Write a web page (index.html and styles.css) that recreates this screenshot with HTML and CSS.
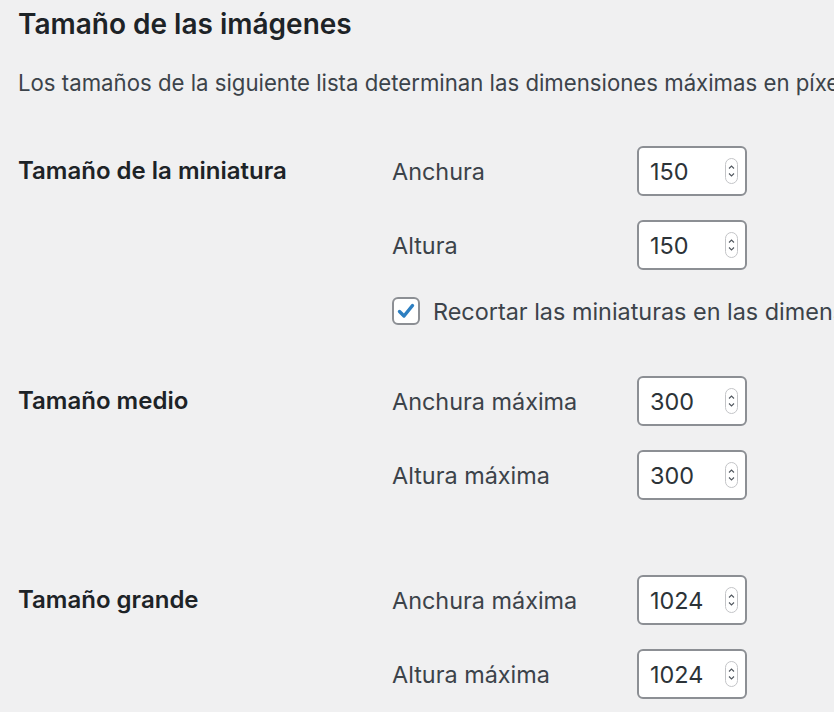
FILE: index.html
```html
<!DOCTYPE html>
<html lang="es">
<head>
  <meta charset="UTF-8" />
  <meta name="viewport" content="width=device-width, initial-scale=1.0"/>
  <title>Ajustes de medios</title>
  <link rel="stylesheet" href="styles.css">
</head>
<body>
  <div class="wrap">
    <h2 class="title">Tamaño de las imágenes</h2>
    <p class="intro">Los tamaños de la siguiente lista determinan las dimensiones máximas en píxeles que se usarán al añadir una imagen a la biblioteca de medios.</p>

    <div class="size-row size-row-first">
      <div class="size-name">Tamaño de la miniatura</div>
      <div class="size-fields">
        <div class="field">
          <span class="field-label">Anchura</span>
          <div class="num">150
            <svg class="spin" width="13" height="26" viewBox="0 0 13 26"><rect x="0.5" y="0.5" width="12" height="25" rx="6" fill="#fff" stroke="#c3c4c7"/><path d="M4 10.5 L6.5 8 L9 10.5 M4 15.5 L6.5 18 L9 15.5" fill="none" stroke="#50575e" stroke-width="1.1"/></svg>
          </div>
        </div>
        <div class="field">
          <span class="field-label">Altura</span>
          <div class="num">150
            <svg class="spin" width="13" height="26" viewBox="0 0 13 26"><rect x="0.5" y="0.5" width="12" height="25" rx="6" fill="#fff" stroke="#c3c4c7"/><path d="M4 10.5 L6.5 8 L9 10.5 M4 15.5 L6.5 18 L9 15.5" fill="none" stroke="#50575e" stroke-width="1.1"/></svg>
          </div>
        </div>
        <label class="crop">
          <span class="check">
            <svg width="20" height="20" viewBox="0 0 20 20"><path d="M3.5 10.5 L8 15 L16.5 4.5" fill="none" stroke="#2d7fc1" stroke-width="3.4" stroke-linecap="round" stroke-linejoin="round"/></svg>
          </span>
          Recortar las miniaturas en las dimensiones exactas (normalmente las miniaturas son proporcionales)
        </label>
      </div>
    </div>

    <div class="size-row">
      <div class="size-name">Tamaño medio</div>
      <div class="size-fields">
        <div class="field">
          <span class="field-label">Anchura máxima</span>
          <div class="num">300
            <svg class="spin" width="13" height="26" viewBox="0 0 13 26"><rect x="0.5" y="0.5" width="12" height="25" rx="6" fill="#fff" stroke="#c3c4c7"/><path d="M4 10.5 L6.5 8 L9 10.5 M4 15.5 L6.5 18 L9 15.5" fill="none" stroke="#50575e" stroke-width="1.1"/></svg>
          </div>
        </div>
        <div class="field">
          <span class="field-label">Altura máxima</span>
          <div class="num">300
            <svg class="spin" width="13" height="26" viewBox="0 0 13 26"><rect x="0.5" y="0.5" width="12" height="25" rx="6" fill="#fff" stroke="#c3c4c7"/><path d="M4 10.5 L6.5 8 L9 10.5 M4 15.5 L6.5 18 L9 15.5" fill="none" stroke="#50575e" stroke-width="1.1"/></svg>
          </div>
        </div>
      </div>
    </div>

    <div class="size-row size-row-large">
      <div class="size-name">Tamaño grande</div>
      <div class="size-fields">
        <div class="field">
          <span class="field-label">Anchura máxima</span>
          <div class="num">1024
            <svg class="spin" width="13" height="26" viewBox="0 0 13 26"><rect x="0.5" y="0.5" width="12" height="25" rx="6" fill="#fff" stroke="#c3c4c7"/><path d="M4 10.5 L6.5 8 L9 10.5 M4 15.5 L6.5 18 L9 15.5" fill="none" stroke="#50575e" stroke-width="1.1"/></svg>
          </div>
        </div>
        <div class="field">
          <span class="field-label">Altura máxima</span>
          <div class="num">1024
            <svg class="spin" width="13" height="26" viewBox="0 0 13 26"><rect x="0.5" y="0.5" width="12" height="25" rx="6" fill="#fff" stroke="#c3c4c7"/><path d="M4 10.5 L6.5 8 L9 10.5 M4 15.5 L6.5 18 L9 15.5" fill="none" stroke="#50575e" stroke-width="1.1"/></svg>
          </div>
        </div>
      </div>
    </div>
  </div>
</body>
</html>
```

FILE: styles.css
```css
body {
  margin: 0;
  padding: 0;
  background-color: #f0f0f1;
  color: #3c434a;
  font-family: Inter, "Noto Sans", sans-serif;
  font-size: 23.4px;
}

.wrap {
  padding-left: 18px;
  width: 816px;
  overflow: hidden;
}

.title {
  margin: 0;
  padding-top: 7px;
  font-size: 28px;
  line-height: 34px;
  font-weight: 600;
  color: #1d2327;
}

.intro {
  margin: 27px 0 0;
  font-size: 22.2px;
  line-height: 30px;
  white-space: nowrap;
}

.size-row {
  display: grid;
  grid-template-columns: 374px 1fr;
  margin-top: 51px;
}

.size-row-first {
  margin-top: 48px;
}

.size-row-large {
  margin-top: 75px;
}

.size-name {
  padding-top: 11px;
  line-height: 28px;
  font-size: 24px;
  font-weight: 600;
  color: #1d2327;
}

.size-fields {
  display: flex;
  flex-direction: column;
  gap: 24px;
}

.field {
  display: flex;
  align-items: center;
  height: 50px;
}

.field-label {
  width: 245px;
}

.num {
  box-sizing: border-box;
  width: 110px;
  height: 50px;
  display: flex;
  align-items: center;
  justify-content: space-between;
  padding: 0 7px 0 11px;
  background: #fff;
  border: 2px solid #8c8f94;
  border-radius: 6px;
  color: #2c3338;
}

.crop {
  display: flex;
  align-items: center;
  gap: 13px;
  height: 28px;
  margin-top: 3px;
  white-space: nowrap;
}

.check {
  box-sizing: border-box;
  flex-shrink: 0;
  width: 28px;
  height: 28px;
  display: flex;
  align-items: center;
  justify-content: center;
  background: #fff;
  border: 2px solid #8c8f94;
  border-radius: 6px;
}
```
